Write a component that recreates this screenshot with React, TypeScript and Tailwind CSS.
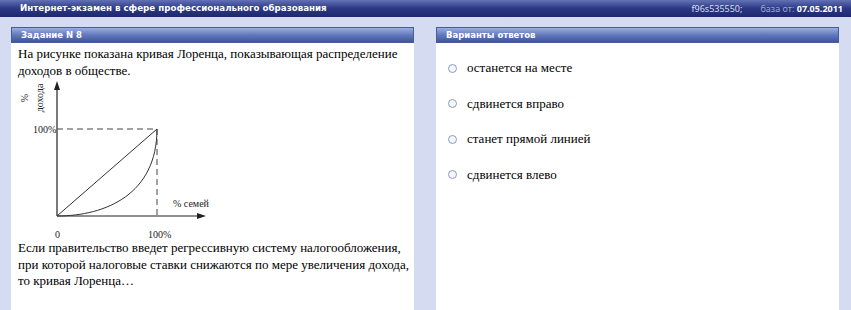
const options = [
  "останется на месте",
  "сдвинется вправо",
  "станет прямой линией",
  "сдвинется влево",
];

function PanelHeader({ title }: { title: string }) {
  return (
    <div className="h-[16px] flex items-center px-[9px] bg-gradient-to-b from-[#9aaee0] via-[#6379bd] to-[#3f559c] border border-[#4a5c98] text-white text-[8.5px] font-bold font-[DejaVu_Sans,sans-serif]">
      {title}
    </div>
  );
}

function LorenzChart() {
  return (
    <svg width="230" height="161" className="block" fontFamily="'Liberation Serif', serif" fontSize="10" fill="#222">
      {/* оси */}
      <line x1="46" y1="8" x2="46" y2="137" stroke="#222" strokeWidth="1.2" />
      <polygon points="46,2 43,11 49,11" fill="#222" />
      <line x1="46" y1="137" x2="188" y2="137" stroke="#222" strokeWidth="1.2" />
      <polygon points="195,137 186,134 186,140" fill="#222" />
      {/* пунктир */}
      <line x1="46" y1="50" x2="146" y2="50" stroke="#444" strokeDasharray="6 4" />
      <line x1="146" y1="50" x2="146" y2="137" stroke="#444" strokeDasharray="6 4" />
      {/* линия равенства и кривая */}
      <line x1="46" y1="137" x2="146" y2="50" stroke="#333" />
      <path d="M46 137 C 95 137, 146 115, 146 50" stroke="#333" fill="none" />
      <text x="22" y="54">100%</text>
      <text x="44" y="159">0</text>
      <text x="137" y="159">100%</text>
      <text x="162" y="128">% семей</text>
      <text transform="translate(17,19) rotate(-90)" textAnchor="middle">%</text>
      <text transform="translate(32,19) rotate(-90)" textAnchor="middle">дохода</text>
    </svg>
  );
}

export default function App() {
  return (
    <div className="w-[851px] h-[310px] overflow-hidden bg-[#d5dcf2] flex flex-col">
      <div className="h-[17px] shrink-0 flex items-center justify-between pl-[20px] pr-[8px] bg-gradient-to-b from-[#6372b4] via-[#2c3884] to-[#1d2870] text-[9px] font-bold">
        <span className="text-white text-[8.7px] font-[DejaVu_Sans,sans-serif]">
          Интернет-экзамен в сфере профессионального образования
        </span>
        <span className="flex items-center gap-[18px] font-sans">
          <span className="text-[#d9def2] font-normal">f96s535550;</span>
          <span>
            <span className="text-[#9aa6d4] font-normal">база от: </span>
            <span className="text-white">07.05.2011</span>
          </span>
        </span>
      </div>

      <div className="flex-1 flex gap-[22px] pt-[10px] px-[11px] pr-[12px]">
        <div className="w-[403px] bg-white flex flex-col">
          <PanelHeader title="Задание N 8" />
          <div className="pt-[3px] pl-[7px] pr-[2px] text-[13px] leading-[16.5px] text-black font-[Liberation_Serif,serif]">
            <p>На рисунке показана кривая Лоренца, показывающая распределение доходов в обществе.</p>
            <div className="-ml-[7px]">
              <LorenzChart />
            </div>
            <p>
              Если правительство введет регрессивную систему налогообложения, при которой налоговые ставки
              снижаются по мере увеличения дохода, то кривая Лоренца…
            </p>
          </div>
        </div>

        <div className="w-[403px] bg-white flex flex-col">
          <PanelHeader title="Варианты ответов" />
          <div className="pt-[17px] pl-[12px] flex flex-col gap-[19.5px] font-[Liberation_Serif,serif] text-[13px] leading-[16px] text-black">
            {options.map((o) => (
              <label key={o} className="flex items-center gap-[10px]">
                <span className="w-[9px] h-[9px] rounded-full border-[1.5px] border-[#8d9cc4] bg-[#f4f6fb]" />
                <span>{o}</span>
              </label>
            ))}
          </div>
        </div>
      </div>
    </div>
  );
}
